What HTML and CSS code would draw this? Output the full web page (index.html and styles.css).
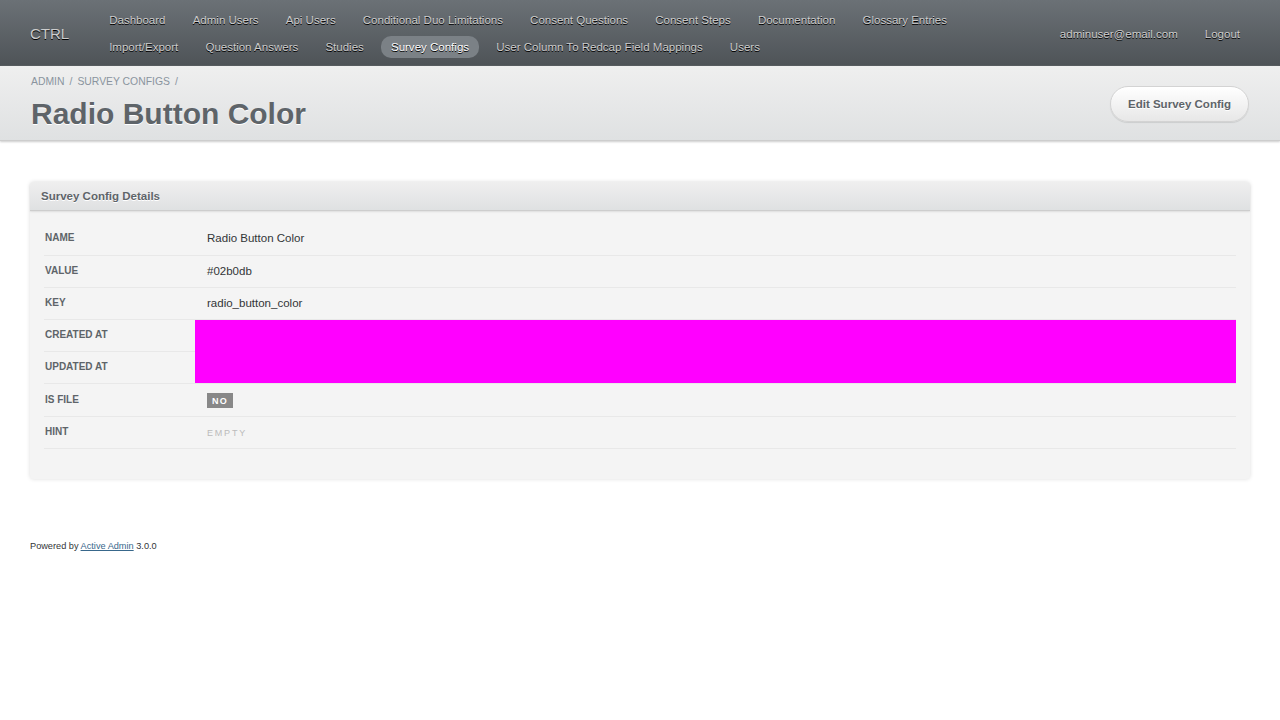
FILE: index.html
```html
<!DOCTYPE html>
<html>
<head>
<meta charset="utf-8">
<title>Radio Button Color | CTRL</title>
<link rel="stylesheet" href="styles.css">
</head>
<body>
<div class="header">
  <h1 class="site-title">CTRL</h1>
  <ul class="tabs">
    <li><a href="#">Dashboard</a></li>
    <li><a href="#">Admin Users</a></li>
    <li><a href="#">Api Users</a></li>
    <li><a href="#">Conditional Duo Limitations</a></li>
    <li><a href="#">Consent Questions</a></li>
    <li><a href="#">Consent Steps</a></li>
    <li><a href="#">Documentation</a></li>
    <li><a href="#">Glossary Entries</a></li>
    <li><a href="#">Import/Export</a></li>
    <li><a href="#">Question Answers</a></li>
    <li><a href="#">Studies</a></li>
    <li class="current"><a href="#">Survey Configs</a></li>
    <li><a href="#">User Column To Redcap Field Mappings</a></li>
    <li><a href="#">Users</a></li>
  </ul>
  <ul class="utility">
    <li><a href="#">adminuser@email.com</a></li>
    <li><a href="#">Logout</a></li>
  </ul>
</div>
<div class="title-bar">
  <div class="title-left">
    <div class="breadcrumb"><a href="#">Admin</a><span class="sep">/</span><a href="#">Survey Configs</a><span class="sep">/</span></div>
    <h2 class="page-title">Radio Button Color</h2>
  </div>
  <a href="#" class="button">Edit Survey Config</a>
</div>
<div class="content">
  <div class="panel">
    <h3 class="panel-head">Survey Config Details</h3>
    <div class="panel-body">
      <table class="attrs">
        <tr><th>Name</th><td>Radio Button Color</td></tr>
        <tr><th>Value</th><td>#02b0db</td></tr>
        <tr><th>Key</th><td>radio_button_color</td></tr>
        <tr><th>Created At</th><td class="mask mask-top"></td></tr>
        <tr><th>Updated At</th><td class="mask"></td></tr>
        <tr><th>Is File</th><td><span class="status">No</span></td></tr>
        <tr><th>Hint</th><td><span class="empty">Empty</span></td></tr>
      </table>
    </div>
  </div>
</div>
<div class="footer">Powered by <a href="#">Active Admin</a> 3.0.0</div>
</body>
</html>
```
FILE: styles.css
```css
* { box-sizing: border-box; }
html, body { margin: 0; padding: 0; }
body {
  font-family: "Liberation Sans", Arial, sans-serif;
  font-size: 11.52px;
  line-height: 1.2;
  color: #323537;
  background: #fff;
}
a { color: inherit; text-decoration: none; }
ul { list-style: none; margin: 0; padding: 0; }

.header {
  display: flex;
  align-items: center;
  height: 66px;
  padding: 9px 30px 9px 30px;
  background: linear-gradient(180deg, #6b7176 0%, #4e5357 100%);
  text-shadow: #000 0 1px 0;
  color: #cdcdcd;
}
.site-title {
  margin: 2px 30px 0 0;
  font-size: 15px;
  font-weight: normal;
  color: #cdcdcd;
  white-space: nowrap;
}
.tabs {
  flex: 1;
  display: flex;
  flex-wrap: wrap;
  row-gap: 5px;
}
.tabs li { margin-right: 7.15px; }
.tabs a, .utility a {
  display: block;
  padding: 5px 10px 5px;
  line-height: 12px;
  border-radius: 10px;
  color: #cdcdcd;
  white-space: nowrap;
}
.tabs li.current a {
  background: #7b8186;
  color: #fff;
}
.utility { display: flex; gap: 7px; margin-left: 10px; margin-top: 2px; }

.title-bar {
  display: flex;
  align-items: center;
  justify-content: space-between;
  height: 75px;
  padding: 7px 31px 8px 31px;
  background: linear-gradient(180deg, #efefef 0%, #dfe1e2 100%);
  border-bottom: 1px solid #cdcdcd;
  box-shadow: 0 1px 2px #ccc;
}
.breadcrumb {
  font-size: 10.4px;
  text-transform: uppercase;
  color: #8a949e;
  line-height: 14px;
}
.breadcrumb .sep { margin: 0 5px; }
.page-title {
  margin: 8px 0 0 0;
  font-size: 30px;
  line-height: 34px;
  font-weight: bold;
  color: #5e6469;
  text-shadow: #fff 0 1px 0;
}
.button {
  display: inline-block;
  margin-top: 2px;
  padding: 11px 17px 10px;
  line-height: 13px;
  font-weight: bold;
  font-size: 11.52px;
  color: #5e6469;
  border: 1px solid #d3d3d3;
  border-radius: 200px;
  background: linear-gradient(180deg, #ffffff 0%, #e7e7e7 100%);
  box-shadow: 0 1px 1px rgba(0,0,0,.1), 0 1px 0 0 rgba(255,255,255,.8) inset;
  text-shadow: #fff 0 1px 0;
}

.content { padding: 41px 30px 0 30px; }
.panel {
  background: #f4f4f4;
  border-radius: 4px;
  box-shadow: 0 0 4px #dddddd;
}
.panel-head {
  margin: 0;
  height: 29px;
  padding: 0 11px;
  line-height: 29px;
  font-size: 11.52px;
  font-weight: bold;
  color: #5e6469;
  text-shadow: #fff 0 1px 0;
  background: linear-gradient(180deg, #efefef 0%, #dfe1e2 100%);
  border-bottom: 1px solid #cdcdcd;
  box-shadow: 0 1px 2px #ddd;
  border-radius: 4px 4px 0 0;
}
.panel-body { padding: 12px 14px 30px 14px; }
.attrs { width: 100%; border-collapse: collapse; }
.attrs th, .attrs td {
  height: 32.2px;
  padding: 1px 12px 0;
  vertical-align: middle;
  border-bottom: 1px solid #e8e8e8;
  text-align: left;
}
.attrs th {
  width: 151px;
  padding-left: 1px;
  padding-top: 0;
  padding-bottom: 1px;
  font-size: 10px;
  font-weight: bold;
  color: #5e6469;
  text-transform: uppercase;
}
.attrs td { color: #323537; }
.attrs td.mask { background: #ff00ff; border-bottom-color: #e8e8e8; }
.attrs td.mask-top { border-bottom-color: #ff00ff; }

.status {
  display: inline-block;
  padding: 3px 5px 2px;
  background: #888;
  color: #fff;
  font-size: 9px;
  font-weight: bold;
  letter-spacing: .15em;
  text-transform: uppercase;
  line-height: 10px;
}
.empty {
  color: #bbb;
  font-size: 9px;
  letter-spacing: .2em;
  text-transform: uppercase;
}
.footer {
  padding: 62px 30px 0;
  font-size: 9.2px;
  color: #323537;
}
.footer a { color: #38678b; text-decoration: underline; }
```
